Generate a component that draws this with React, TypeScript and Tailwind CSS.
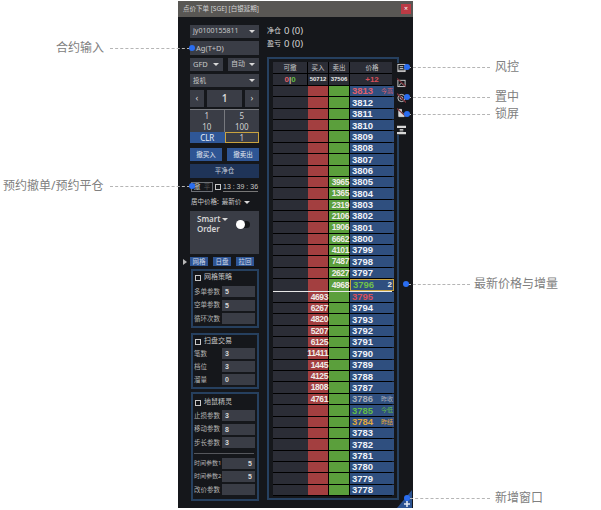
const font = { fontFamily: '"Noto Sans", "Noto Sans CJK SC", sans-serif' }
const numFont = { fontFamily: '"Liberation Sans", "Noto Sans CJK SC", sans-serif' }

type Level = { price: number; ask?: number; bid?: number; tag?: string; tone?: string; delta?: string; cur?: boolean }

const asks: Record<number, number> = { 3805: 3965, 3804: 1365, 3803: 2319, 3802: 2106, 3801: 1906, 3800: 6662, 3799: 4101, 3798: 7487, 3797: 2627, 3796: 4968 }
const bids: Record<number, number> = { 3795: 4693, 3794: 6267, 3793: 4820, 3792: 5207, 3791: 6125, 3790: 11411, 3789: 1445, 3788: 4125, 3787: 1808, 3786: 4761 }

const levels: Level[] = []
for (let p = 3813; p >= 3778; p--) {
  const l: Level = { price: p, ask: asks[p], bid: bids[p] }
  if (p === 3813) { l.tag = '今高'; l.tone = 'text-[#e0606a]' }
  if (p === 3796) { l.tone = 'text-[#6fc04a]'; l.delta = '2'; l.cur = true }
  if (p === 3795) l.tone = 'text-[#d9505a]'
  if (p === 3786) { l.tag = '昨收'; l.tone = 'text-[#a8adb5]' }
  if (p === 3785) { l.tag = '今低'; l.tone = 'text-[#62bd45]' }
  if (p === 3784) { l.tag = '昨结'; l.tone = 'text-[#e0a93e]' }
  levels.push(l)
}

function Caret() {
  return <span className="shrink-0 w-0 h-0 border-x-[3px] border-x-transparent border-t-[3px] border-t-[#d8d8d8]" />
}

function Select({ label, className }: { label: string; className: string }) {
  return (
    <div className={`flex items-center justify-between bg-[#3a3d46] pl-[3px] pr-[4px] text-[#c8c8c8] whitespace-nowrap ${className}`}>
      <span>{label}</span>
      <Caret />
    </div>
  )
}

function Field({ label, value, right }: { label: string; value?: string; right?: boolean }) {
  return (
    <div className="flex items-center h-[11px]">
      <span className={`w-[28px] shrink-0 text-[#b4b4b4] whitespace-nowrap ${right ? 'text-[6px]' : 'text-[6.5px]'}`}>{label}</span>
      <span className={`w-[33px] h-[11px] bg-[#3a3d46] px-[3px] text-[7px] font-bold leading-[11px] text-[#d8d8d8] ${right ? 'text-right' : ''}`} style={numFont}>{value}</span>
    </div>
  )
}

function Check() {
  return <span className="w-[6px] h-[6px] border border-[#c8c8c8] shrink-0" />
}

function Section({ title, className, children }: { title: string; className: string; children: React.ReactNode }) {
  return (
    <div className={`w-[68px] ml-[1px] border-2 border-[#26405f] pl-[1px] ${className}`}>
      <div className="flex items-center gap-[3px] h-[11px] pl-[1px] text-[7px] text-[#c4c4c4]">
        <Check />
        {title}
      </div>
      {children}
    </div>
  )
}

function LeftPanel() {
  return (
    <div className="w-[69px] ml-[12px] pt-[8px] shrink-0">
      <Select label="jy0100155811" className="h-[13px] text-[7px]" />
      <div className="h-[14px] mt-[3px] bg-[#3a3d46] pl-[6px] text-[7.5px] leading-[14px] text-[#c8c8c8]">Ag(T+D)</div>
      <div className="flex justify-between mt-[3px]">
        <Select label="GFD" className="h-[13px] w-[33px] text-[7.5px]" />
        <Select label="自动" className="h-[13px] w-[31px] text-[7px]" />
      </div>
      <Select label="投机" className="h-[13px] mt-[3px] text-[6.5px]" />
      <div className="flex justify-between mt-[3px] h-[17px] text-[#d8d8d8]">
        <span className="w-[14px] bg-[#3a3d46] text-center text-[9px] leading-[16px]">‹</span>
        <span className="w-[35px] bg-[#3a3d46] text-center text-[10px] font-semibold leading-[17px]">1</span>
        <span className="w-[14px] bg-[#3a3d46] text-center text-[9px] leading-[16px]">›</span>
      </div>
      <div className="grid grid-cols-2 mt-[2px] h-[34px] text-[8px] leading-[11px] text-center text-[#d0d0d0] border-t border-[#77797e]">
        <span className="bg-[#3a3d46] border-r border-[#77797e]">1</span>
        <span className="bg-[#3a3d46]">5</span>
        <span className="bg-[#3a3d46] border-r border-[#77797e]">10</span>
        <span className="bg-[#3a3d46]">100</span>
        <span className="bg-[#2f5797] text-[#e8eef8]">CLR</span>
        <span className="bg-[#3a3d46] border border-[#c9a33f] leading-[9px]">1</span>
      </div>
      <div className="flex justify-between mt-[5px] text-[6.5px] leading-[13px] text-center text-[#e4e8ef]">
        <span className="w-[32px] h-[13px] bg-[#2e5594]">撤买入</span>
        <span className="w-[32px] h-[13px] bg-[#2e5594]">撤卖出</span>
      </div>
      <div className="h-[14px] mt-[3px] bg-[#1f3458] text-center text-[6.5px] leading-[14px] text-[#c8d0dc]">平净仓</div>
      <div className="flex items-center mt-[4px] h-[10px] text-[6.5px] text-[#c4c4c4]">
        <span className="flex w-[22px] h-[10px] ml-[1px] border border-[#6c6f75] leading-[8px] text-center">
          <span className="w-[10px] text-[#d0d0d0]">撤</span>
          <span className="w-[10px] text-[#555]">平</span>
        </span>
        <span className="ml-[2px] mr-[2px] w-[6px] h-[6px] border border-[#c8c8c8]" />
        <span className="text-[7px] whitespace-nowrap border-b border-[#777] leading-[9px]" style={numFont}>13 : 39 : 36</span>
      </div>
      <div className="flex items-center gap-[3px] h-[12px] mt-[4px] text-[6.5px] text-[#c8c8c8] whitespace-nowrap">
        <span className="pl-[1px]">居中价格:</span>
        <span>最新价</span>
        <Caret />
      </div>
      <div className="relative h-[43px] mt-[3px] bg-[#3a3d46] pl-[7px] pt-[3px] text-[8px] leading-[10px] font-semibold text-[#d4d4d4]">
        <div className="flex items-center gap-[2px]">Smart <Caret /></div>
        <div>Order</div>
        <span className="absolute left-[48px] top-[10px] w-[12px] h-[7px] rounded-full bg-[#15171a]" />
        <span className="absolute left-[46px] top-[9px] w-[9px] h-[9px] rounded-full bg-white" />
      </div>
      <div className="relative flex gap-[5px] mt-[3px] h-[9px] text-[6.5px] leading-[9px] text-center text-[#cfd8e6]">
        <span className="absolute -left-[7px] top-[2px] w-0 h-0 border-y-[3px] border-y-transparent border-l-[4px] border-l-[#b8b8b8]" />
        <span className="w-[18px] bg-[#2e5594]">网格</span>
        <span className="w-[18px] bg-[#2e5594]">日盘</span>
        <span className="w-[18px] bg-[#2e5594]">拉回</span>
      </div>
      <Section title="网格策略" className="h-[59px] mt-[3px] pt-[1px]">
        <div className="flex flex-col gap-[2.5px] mt-[3px]">
          <Field label="多单参数" value="5" />
          <Field label="空单参数" value="5" />
          <Field label="循环次数" />
        </div>
      </Section>
      <Section title="扫盘交易" className="h-[56px] mt-[5px] pt-[1px]">
        <div className="flex flex-col gap-[2px] mt-[1px]">
          <Field label="笔数" value="3" />
          <Field label="档位" value="3" />
          <Field label="溜量" value="0" />
        </div>
      </Section>
      <Section title="地鼠精灵" className="h-[109px] mt-[3px] pt-[3px]">
        <div className="flex flex-col gap-[2.5px] mt-[2px]">
          <Field label="止损参数" value="3" />
          <Field label="移动参数" value="8" />
          <Field label="步长参数" value="3" />
        </div>
        <div className="h-px bg-[#55575c] mt-[5px] mb-[4px] mr-[3px]" />
        <div className="flex flex-col gap-[2px]">
          <Field label="时间参数1" value="5" right />
          <Field label="时间参数2" value="5" right />
          <Field label="改价参数" />
        </div>
      </Section>
    </div>
  )
}

function Ladder() {
  return (
    <div className="w-[132px] h-[443px] border-2 border-[#26405f] pl-[4px] pr-[5px] pt-[3px] pb-[2px] flex flex-col">
      <div className="grid grid-cols-[35px_21px_21px_44px] h-[12px] bg-[#2b2d36] text-[6.5px] leading-[11px] text-center text-[#c8c8c8] border-b border-black">
        <span className="border-r border-black">可撤</span>
        <span className="border-r border-black">买入</span>
        <span className="border-r border-black">卖出</span>
        <span>价格</span>
      </div>
      <div className="grid grid-cols-[35px_21px_21px_44px] h-[12px] bg-[#2b2d36] text-[6px] font-bold leading-[11px] text-center border-b border-black text-[#e8e8e8]" style={numFont}>
        <span className="border-r border-black text-[8px]"><span className="text-[#e0606a]">0</span><span className="text-[#bbb]">|</span><span className="text-[#62bd45]">0</span></span>
        <span className="border-r border-black">50712</span>
        <span className="border-r border-black">37506</span>
        <span className="text-[#d9505a] text-[8px]">+12</span>
      </div>
      <div className="flex-1 flex flex-col">
        {levels.map(l => (
          <div key={l.price} className={`flex-1 grid grid-cols-[35px_21px_21px_44px] border-b ${l.price === 3796 ? 'border-[#e8e8e8]' : 'border-black'} text-[8.5px] font-bold text-[#f0ece8] leading-none`} style={numFont}>
            <span className="bg-[#2b2d36]" />
            <span className="bg-[#a33f40] flex items-center justify-end border-r border-black whitespace-nowrap tracking-[-0.4px]">{l.bid}</span>
            <span className="bg-[#5b9f3c] flex items-center justify-end border-r border-black tracking-[-0.4px]">{l.ask}</span>
            <span className={`bg-[#2f4f7f] flex items-center justify-between pl-[2px] pr-[1px] ${l.cur ? 'border border-[#c9a33f]' : ''}`}>
              <span className={`text-[9.5px] ${l.tone ?? 'text-[#eef2f8]'}`}>{l.price}</span>
              {l.tag && <span className={`text-[6px] font-normal ${l.tone}`}>{l.tag}</span>}
              {l.delta && <span className="text-[8px]">{l.delta}</span>}
            </span>
          </div>
        ))}
      </div>
    </div>
  )
}

function ToolIcon({ children }: { children: React.ReactNode }) {
  return <svg width="9" height="10" viewBox="0 0 10 10" className="block" fill="none" stroke="#d8d8d8" strokeWidth="1">{children}</svg>
}

function Tools() {
  return (
    <div className="absolute left-[397px] top-[63px] flex flex-col gap-[5px] bg-[#15171b]">
      <ToolIcon><rect x="1" y="1" width="8" height="8" /><path d="M3 3.5h4M3 5.5h4M1 7.5h8" /></ToolIcon>
      <ToolIcon><rect x="1" y="2" width="8" height="7" /><path d="M2 8l3-3 3 3" /><path d="M0 0l10 9" stroke="#7a3038" strokeWidth="1.4" /></ToolIcon>
      <ToolIcon><circle cx="5" cy="5" r="4" /><circle cx="5" cy="5" r="1.5" /><path d="M0 0l10 10" stroke="#7a3038" strokeWidth="1.4" /></ToolIcon>
      <ToolIcon><path d="M2 1h3v3l3 3v2H2z" fill="#d8d8d8" /><path d="M0 0l10 9" stroke="#7a3038" strokeWidth="1.4" /></ToolIcon>
      <div className="mt-[2px]">
        <ToolIcon><path d="M0 1.5h10M0 8.5h10" strokeWidth="2.5" /><path d="M3 4.5h4M3 6h4" /></ToolIcon>
      </div>
    </div>
  )
}

function Callout({ label, top, lineLeft, lineWidth, labelLeft, dot }: { label: string; top: number; lineLeft: number; lineWidth: number; labelLeft: number; dot: number }) {
  return (
    <>
      <span className="absolute text-[12px] leading-[14px] text-[#808080] whitespace-nowrap" style={{ left: labelLeft, top: top - 7 }}>{label}</span>
      <span className="absolute border-t border-dashed border-[#b5b5b5]" style={{ left: lineLeft, top, width: lineWidth }} />
      <span className="absolute w-[6px] h-[6px] rounded-full bg-[#2a6df0]" style={{ left: dot - 3, top: top - 3 }} />
    </>
  )
}

export default function App() {
  return (
    <div className="relative w-[601px] h-[510px] bg-white overflow-hidden pt-px" style={font}>
      <div className="ml-[178px] w-[235px] h-[507px] bg-[#15171b] flex flex-col">
        <div className="flex items-center justify-between h-[16px] bg-[#595754] pl-[5px] pr-[1px] text-[6.5px] text-[#d4d4d4]">
          <span>点价下单 [SGE] [白银延期]</span>
          <span className="w-[10px] h-[10px] mr-[1px] bg-[#bb3a44] text-center text-[7px] leading-[10px] text-white">×</span>
        </div>
        <div className="flex flex-1">
          <LeftPanel />
          <div className="ml-[8px] flex-1">
            <div className="h-[40px] pt-[8px] text-[#d4d4d4]">
              <div className="flex items-center gap-[3px] h-[13px] text-[7px]">净仓 <span className="text-[9.5px]">0 (0)</span></div>
              <div className="flex items-center gap-[3px] h-[13px] text-[7px]">盈亏 <span className="text-[9.5px]">0 (0)</span></div>
            </div>
            <Ladder />
          </div>
        </div>
      </div>
      <Tools />
      <svg width="16" height="19" viewBox="0 0 16 19" className="absolute left-[397px] top-[490px]">
        <path d="M15 0V18H0z" fill="#2c5391" />
        <path d="M10 11v6M7 14h6" stroke="#dfe6f2" strokeWidth="1.6" />
      </svg>
      <Callout label="合约输入" top={48} lineLeft={110} lineWidth={80} labelLeft={56} dot={192} />
      <Callout label="预约撤单/预约平仓" top={186} lineLeft={110} lineWidth={80} labelLeft={3} dot={192} />
      <Callout label="风控" top={67} lineLeft={408} lineWidth={82} labelLeft={495} dot={407} />
      <Callout label="置中" top={97} lineLeft={408} lineWidth={82} labelLeft={495} dot={407} />
      <Callout label="锁屏" top={114} lineLeft={408} lineWidth={82} labelLeft={495} dot={407} />
      <Callout label="最新价格与增量" top={284} lineLeft={408} lineWidth={62} labelLeft={474} dot={406} />
      <Callout label="新增窗口" top={498} lineLeft={410} lineWidth={80} labelLeft={495} dot={407} />
    </div>
  )
}
